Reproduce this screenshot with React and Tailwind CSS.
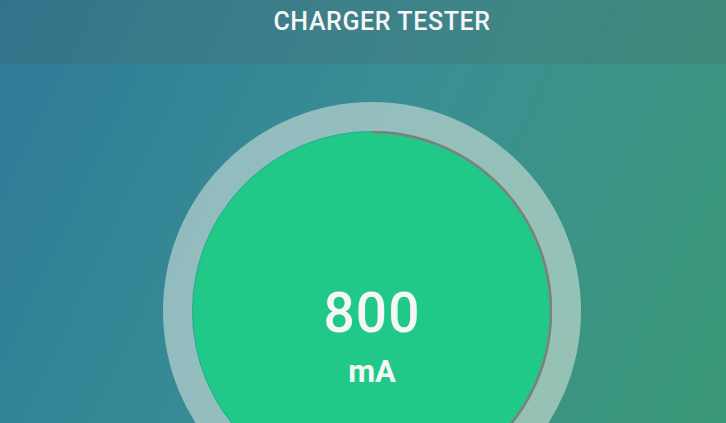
const RING = 2 * Math.PI * 179;

const Gauge = ({ value, unit, percent }) => (
  <div className="flex h-[418px] w-[418px] shrink-0 items-center justify-center rounded-full bg-[rgba(240,240,232,0.5)]">
    <div className="relative flex h-[360px] w-[360px] flex-col items-center rounded-full bg-[#20c987] pt-[155px] text-[#f6f6f6]">
      <svg
        className="absolute inset-0 -rotate-90"
        width="360"
        height="360"
        viewBox="0 0 360 360"
      >
        <circle cx="180" cy="180" r="179.5" fill="none" stroke="rgba(60,130,150,0.45)" strokeWidth="1" />
        <circle
          cx="180"
          cy="180"
          r="179"
          fill="none"
          stroke="#7f7f80"
          strokeWidth="2.5"
          strokeDasharray={`${RING * percent} ${RING}`}
        />
      </svg>
      <span className="relative text-[55px] leading-none font-medium tracking-[1px]">{value}</span>
      <span className="relative mt-[15px] text-[31px] leading-none font-bold">{unit}</span>
    </div>
  </div>
);

export default function App() {
  return (
    <div
      className="flex h-[423px] w-[726px] flex-col overflow-hidden bg-[linear-gradient(115deg,#2d7a98_0%,#3a8f94_50%,#3b9876_100%)]"
      style={{ fontFamily: 'Roboto, "Liberation Sans", sans-serif' }}
    >
      <header className="flex h-16 shrink-0 justify-center bg-[rgba(85,88,88,0.2)] pt-[6px] pl-[38px]">
        <h1 className="text-[25px] leading-8 font-medium tracking-[0.6px] text-[#f6f6f6]">CHARGER TESTER</h1>
      </header>
      <main className="flex justify-center pt-[38px] pl-[18px]">
        <Gauge value="800" unit="mA" percent={0.4} />
      </main>
    </div>
  );
}
